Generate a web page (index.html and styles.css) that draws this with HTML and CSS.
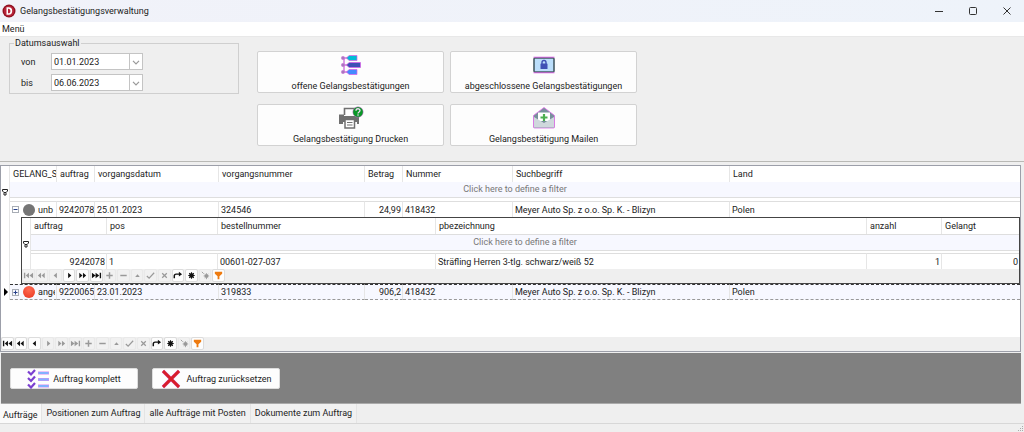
FILE: index.html
```html
<!DOCTYPE html>
<html lang="de">
<head>
<meta charset="utf-8">
<title>Gelangsbestätigungsverwaltung</title>
<link rel="stylesheet" href="styles.css">
</head>
<body>
<svg class="sprite" aria-hidden="true">
  <symbol id="first" viewBox="0 0 12 12"><path d="M1 3h1.500v6H1zM6.500 3v6L3 6zM11 3v6L7 6z"/></symbol>
  <symbol id="rewind" viewBox="0 0 12 12"><path d="M5.500 3v6L2 6zM9.500 3v6L6 6z"/></symbol>
  <symbol id="prev" viewBox="0 0 12 12"><path d="M7.500 3v6L4 6z"/></symbol>
  <symbol id="next" viewBox="0 0 12 12"><path d="M4.500 3v6L8 6z"/></symbol>
  <symbol id="forward" viewBox="0 0 12 12"><path d="M2.500 3v6L6 6zM6.500 3v6L10 6z"/></symbol>
  <symbol id="last" viewBox="0 0 12 12"><path d="M1 3v6l4-3zM5 3v6l4-3zM9.500 3H11v6H9.500z"/></symbol>
  <symbol id="plus" viewBox="0 0 12 12"><path d="M5.200 2.500h1.600v2.700h2.700v1.600H6.800v2.700H5.200V6.800H2.500V5.200h2.700z"/></symbol>
  <symbol id="minus" viewBox="0 0 12 12"><path d="M2.500 5.200h7v1.600h-7z"/></symbol>
  <symbol id="edit" viewBox="0 0 12 12"><path d="M3.500 7.500h5L6 4.500z"/></symbol>
  <symbol id="post" viewBox="0 0 12 12"><path d="M2 6.500L4.500 9 10 3" fill="none" stroke="currentColor" stroke-width="1.300"/></symbol>
  <symbol id="cancel" viewBox="0 0 12 12"><path d="M3.500 3.500l5 5M8.500 3.500l-5 5" fill="none" stroke="currentColor" stroke-width="1.300"/></symbol>
  <symbol id="refresh" viewBox="0 0 12 12"><path d="M2.500 9V6.500q0-2 2-2H8" fill="none" stroke="currentColor" stroke-width="1.600"/><path d="M7.500 2L11 4.500 7.500 7z"/></symbol>
  <symbol id="mark" viewBox="0 0 12 12"><circle cx="6" cy="6" r="2.500"/><path d="M6 2.500v7M2.500 6h7M3.500 3.500l5 5M8.500 3.500l-5 5" stroke="currentColor" stroke-width="1.200"/></symbol>
  <symbol id="goto" viewBox="0 0 12 12"><circle cx="7" cy="6.500" r="2"/><path d="M7 3.500v6.500M4 6.500h6M5 4.500l4 4M9 4.500l-4 4M2 2l2 2" stroke="currentColor" stroke-width="1"/></symbol>
  <symbol id="filter" viewBox="0 0 12 12"><path d="M2 2h8v2L7 6.800V10H5V6.800L2 4z" fill="#ee7b10"/></symbol>
  <symbol id="pin" viewBox="0 0 8 8"><path d="M1.500 1.500h5v1.500L5 4.500H3L1.500 3zM3 4.500h2v2.500H3z" fill="none" stroke="#222" stroke-width="1"/></symbol>
</svg>

<header class="titlebar">
  <svg class="app-icon" viewBox="0 0 14 14" aria-hidden="true"><circle cx="7" cy="7" r="6.500" fill="#8f1020"/><circle cx="7" cy="7" r="5.200" fill="#b8243a"/><path d="M4.500 3.300h2.300a3.400 3.700 0 0 1 0 7.400H4.500zM6 4.700v4.600c3.300.3 3.300-4.900 0-4.600z" fill="#fff" fill-rule="evenodd"/></svg>
  <h1>Gelangsbestätigungsverwaltung</h1>
  <div class="window-buttons">
    <button type="button" aria-label="Minimieren"><svg viewBox="0 0 10 10"><path d="M1 5.500h8"/></svg></button>
    <button type="button" aria-label="Maximieren"><svg viewBox="0 0 10 10"><rect x="1.500" y="1.500" width="7" height="7" rx="1"/></svg></button>
    <button type="button" aria-label="Schließen"><svg viewBox="0 0 10 10"><path d="M1.500 1.500l7 7M8.500 1.500l-7 7"/></svg></button>
  </div>
</header>

<nav class="menubar"><button type="button">Menü</button></nav>

<section class="toolbar">
  <fieldset class="dates">
    <legend>Datumsauswahl</legend>
    <label for="von">von</label>
    <div class="combo"><input id="von" value="01.01.2023"><button type="button" aria-label="Kalender von"><svg viewBox="0 0 10 10"><path d="M2.500 4L5 6.500 7.500 4"/></svg></button></div>
    <label for="bis">bis</label>
    <div class="combo"><input id="bis" value="06.06.2023"><button type="button" aria-label="Kalender bis"><svg viewBox="0 0 10 10"><path d="M2.500 4L5 6.500 7.500 4"/></svg></button></div>
  </fieldset>
  <div class="actions">
    <button type="button" class="action">
      <svg viewBox="0 0 24 24" aria-hidden="true"><path d="M5 5v14M5 5h6M5 12h6M5 19h6" stroke="#d173dc" stroke-width="1.400"/><g fill="#a878bd" stroke="#d173dc" stroke-width=".5"><circle cx="4" cy="5" r="1.700"/><circle cx="4" cy="12" r="1.700"/><circle cx="4" cy="19" r="1.700"/></g><g stroke="#dc5be9" stroke-width=".7"><path d="M10 2.500h8v5h-8L7.500 5z" fill="#00bcd4"/><path d="M10 9.500h11.500v5H10L7.500 12z" fill="#3f51b5"/><path d="M10 16.500h8v5h-8L7.500 19z" fill="#448aff"/></g></svg>
      <span>offene Gelangsbestätigungen</span>
    </button>
    <button type="button" class="action">
      <svg viewBox="0 0 24 24" aria-hidden="true"><rect x="2" y="5" width="20" height="14" rx="1" fill="#bbdefb" stroke="#455a64" stroke-width="1.600"/><path d="M1.500 4.200h21M1.500 19.800h21" stroke="#dc4de7" stroke-width=".8"/><path d="M10 11V9.500a2 2 0 0 1 4 0V11" fill="none" stroke="#3f51b5" stroke-width="1.400"/><rect x="8.500" y="10.500" width="7" height="5.500" rx=".6" fill="#3f51b5"/></svg>
      <span>abgeschlossene Gelangsbestätigungen</span>
    </button>
    <button type="button" class="action">
      <svg class="printer" viewBox="0 0 26 24" aria-hidden="true"><path d="M6.500 9V2.500h10V9" fill="#fff" stroke="#707070" stroke-width="1.600"/><path d="M3 10.500V8.500H1V18h4v-2h14v2h2v-7.500a2 2 0 0 0-2-2h-2v1.500H6V8.500H3z" fill="#707070"/><path d="M7 13.500h9.500V22H7z" fill="#fff" stroke="#707070" stroke-width="1.500"/><path d="M9 16.500h5.500M9 19h5.500" stroke="#707070" stroke-width="1.200"/><circle cx="20" cy="6" r="5.200" fill="#0a9827" stroke="#d267d8" stroke-width=".5"/><path d="M18 4.800c0-2.700 4-2.700 4-.2 0 1.400-2 1.300-2 3" fill="none" stroke="#f3d9f5" stroke-width="1.300"/><circle cx="20" cy="9" r=".8" fill="#f3d9f5"/></svg>
      <span>Gelangsbestätigung Drucken</span>
    </button>
    <button type="button" class="action">
      <svg viewBox="0 0 24 24" aria-hidden="true"><path d="M1.500 9.500L12 1.500l10.500 8V21q0 1-1 1h-19q-1 0-1-1z" fill="#78909c" stroke="#e06ae9" stroke-width=".8"/><path d="M6 6.500h12V15H6z" fill="#fff"/><path d="M2 11l10 6 10-6v10.500H2z" fill="#cfd8dc"/><path d="M12 8v7M8.500 11.500h7" stroke="#4caf50" stroke-width="2.200"/></svg>
      <span>Gelangsbestätigung Mailen</span>
    </button>
  </div>
</section>

<main class="grid">
  <div class="grid-body">
    <table class="master">
      <colgroup><col class="c-ind"><col class="c-status"><col class="c-auftrag"><col class="c-datum"><col class="c-vnr"><col class="c-betrag"><col class="c-nummer"><col class="c-such"><col></colgroup>
      <thead>
        <tr><td class="ind"></td><th>GELANG_S</th><th>auftrag</th><th>vorgangsdatum</th><th>vorgangsnummer</th><th>Betrag</th><th>Nummer</th><th>Suchbegriff</th><th>Land</th></tr>
        <tr class="filter-row"><td class="ind"><svg class="pin" aria-hidden="true"><use href="#pin"/></svg></td><td colspan="8"><div>Click here to define a filter</div></td></tr>
      </thead>
      <tbody>
        <tr><td class="ind"></td><td><div class="status"><button type="button" class="toggle" aria-label="Zuklappen"><svg viewBox="0 0 7 7"><path d="M1.500 3.500h4"/></svg></button><i class="dot"></i><span>unb</span></div></td><td class="num">9242078</td><td>25.01.2023</td><td>324546</td><td class="num">24,99</td><td>418432</td><td>Meyer Auto Sp. z o.o. Sp. K. - Blizyn</td><td>Polen</td></tr>
        <tr class="detail-row"><td class="ind"></td><td colspan="8">
          <div class="detail">
            <table>
              <colgroup><col class="c-ind"><col class="d-auftrag"><col class="d-pos"><col class="d-bnr"><col><col class="d-anzahl"><col class="d-gelangt"></colgroup>
              <thead>
                <tr><td class="ind"></td><th>auftrag</th><th>pos</th><th>bestellnummer</th><th>pbezeichnung</th><th>anzahl</th><th>Gelangt</th></tr>
                <tr class="filter-row"><td class="ind"><svg class="pin" aria-hidden="true"><use href="#pin"/></svg></td><td colspan="6"><div>Click here to define a filter</div></td></tr>
              </thead>
              <tbody>
                <tr><td class="ind"></td><td class="num">9242078</td><td>1</td><td>00601-027-037</td><td>Sträfling Herren 3-tlg. schwarz/weiß 52</td><td class="num">1</td><td class="num">0</td></tr>
              </tbody>
            </table>
            <div class="navigator">
              <button type="button" disabled aria-label="Erster"><svg><use href="#first"/></svg></button>
              <button type="button" disabled aria-label="Seite zurück"><svg><use href="#rewind"/></svg></button>
              <button type="button" disabled aria-label="Zurück"><svg><use href="#prev"/></svg></button>
              <button type="button" aria-label="Weiter"><svg><use href="#next"/></svg></button>
              <button type="button" aria-label="Seite vor"><svg><use href="#forward"/></svg></button>
              <button type="button" aria-label="Letzter"><svg><use href="#last"/></svg></button>
              <button type="button" disabled aria-label="Einfügen"><svg><use href="#plus"/></svg></button>
              <button type="button" disabled aria-label="Löschen"><svg><use href="#minus"/></svg></button>
              <button type="button" disabled aria-label="Bearbeiten"><svg><use href="#edit"/></svg></button>
              <button type="button" disabled aria-label="Speichern"><svg><use href="#post"/></svg></button>
              <button type="button" disabled aria-label="Abbrechen"><svg><use href="#cancel"/></svg></button>
              <button type="button" aria-label="Aktualisieren"><svg><use href="#refresh"/></svg></button>
              <button type="button" aria-label="Lesezeichen"><svg><use href="#mark"/></svg></button>
              <button type="button" disabled aria-label="Zum Lesezeichen"><svg><use href="#goto"/></svg></button>
              <button type="button" aria-label="Filter"><svg><use href="#filter"/></svg></button>
            </div>
          </div>
        </td></tr>
        <tr class="focused"><td class="ind"><svg class="current" viewBox="0 0 5 8" aria-hidden="true"><path d="M0 0v8l4-4z"/></svg></td><td><div class="status"><button type="button" class="toggle" aria-label="Aufklappen"><svg viewBox="0 0 7 7"><path d="M1.500 3.500h4M3.500 1.500v4"/></svg></button><i class="dot red"></i><span>ange</span></div></td><td class="num">9220065</td><td>23.01.2023</td><td>319833</td><td class="num">906,2</td><td>418432</td><td>Meyer Auto Sp. z o.o. Sp. K. - Blizyn</td><td>Polen</td></tr>
      </tbody>
    </table>
  </div>
  <div class="nav-row">
    <div class="navigator">
      <button type="button" aria-label="Erster"><svg><use href="#first"/></svg></button>
      <button type="button" aria-label="Seite zurück"><svg><use href="#rewind"/></svg></button>
      <button type="button" aria-label="Zurück"><svg><use href="#prev"/></svg></button>
      <button type="button" disabled aria-label="Weiter"><svg><use href="#next"/></svg></button>
      <button type="button" disabled aria-label="Seite vor"><svg><use href="#forward"/></svg></button>
      <button type="button" disabled aria-label="Letzter"><svg><use href="#last"/></svg></button>
      <button type="button" disabled aria-label="Einfügen"><svg><use href="#plus"/></svg></button>
      <button type="button" disabled aria-label="Löschen"><svg><use href="#minus"/></svg></button>
      <button type="button" disabled aria-label="Bearbeiten"><svg><use href="#edit"/></svg></button>
      <button type="button" disabled aria-label="Speichern"><svg><use href="#post"/></svg></button>
      <button type="button" disabled aria-label="Abbrechen"><svg><use href="#cancel"/></svg></button>
      <button type="button" aria-label="Aktualisieren"><svg><use href="#refresh"/></svg></button>
      <button type="button" aria-label="Lesezeichen"><svg><use href="#mark"/></svg></button>
      <button type="button" disabled aria-label="Zum Lesezeichen"><svg><use href="#goto"/></svg></button>
      <button type="button" aria-label="Filter"><svg><use href="#filter"/></svg></button>
    </div>
  </div>
</main>

<section class="commands">
  <button type="button"><svg viewBox="0 0 22 20" aria-hidden="true"><path d="M1 2.500L4 5.500 8 1M1 9L4 12 8 7.500M1 15.500L4 18.500 8 14" fill="none" stroke="#7b3fd0" stroke-width="2.200"/><path d="M11 4H22M11 10.500H22M11 17H22" stroke="#d88cf0" stroke-width="2.800"/><path d="M11.500 4h10M11.500 10.500h10M11.500 17h10" stroke="#82b1ff" stroke-width="1.800"/></svg>Auftrag komplett</button>
  <button type="button" class="reset"><svg viewBox="0 0 20 20" aria-hidden="true"><path d="M2 2l16 16M18 2L2 18" stroke="#d63c9b" stroke-width="3.400"/><path d="M2 2l16 16M18 2L2 18" stroke="#d81f27" stroke-width="2.600"/></svg>Auftrag zurücksetzen</button>
</section>

<nav class="tabs">
  <button type="button" class="active">Aufträge</button>
  <button type="button">Positionen zum Auftrag</button>
  <button type="button">alle Aufträge mit Posten</button>
  <button type="button">Dokumente zum Auftrag</button>
</nav>
<footer class="statusbar"><svg viewBox="0 0 6 6" aria-hidden="true"><path d="M4 0h1v1H4zM4 2h1v1H4zM4 4h1v1H4zM2 2h1v1H2zM2 4h1v1H2zM0 4h1v1H0z"/></svg></footer>
</body>
</html>
```
FILE: styles.css
```css
* { box-sizing: border-box; }

body {
  margin: 0;
  min-height: 100vh;
  display: flex;
  flex-direction: column;
  background: #efefef;
  color: #222;
  font: 9px/12px Roboto, "Open Sans", sans-serif;
}

button, input {
  margin: 0;
  padding: 0;
  border: 0;
  background: none;
  color: inherit;
  font: inherit;
}

svg { display: block; flex: none; }
.sprite { position: absolute; width: 0; height: 0; }

.titlebar {
  display: flex;
  align-items: center;
  height: 22px;
  padding-left: 2px;
  background: linear-gradient(90deg, #f1f2f9, #eef3fa);
}
.titlebar h1 { margin: 0; padding-left: 4px; font: inherit; }
.app-icon { width: 14px; height: 14px; }
.window-buttons { display: flex; margin-left: auto; }
.window-buttons button {
  display: flex;
  align-items: center;
  justify-content: center;
  width: 34px;
  height: 20px;
}
.window-buttons svg { width: 10px; height: 10px; fill: none; stroke: #333; }

.menubar {
  height: 15px;
  padding: 1px 2px;
  background: #fff;
  border-bottom: 1px solid #e8e8e8;
}

.toolbar {
  display: flex;
  align-items: flex-start;
  gap: 18px;
  height: 125px;
  padding: 0 9px;
  border-bottom: 1px solid #b9b9b5;
}
.dates {
  display: grid;
  grid-template-columns: 30px 92px;
  gap: 4px 0;
  align-items: center;
  width: 230px;
  height: 57px;
  margin: 0;
  padding: 4px 11px 0;
  border: 1px solid #cfcfcf;
  align-content: start;
}
.dates legend { padding: 0 1px; margin-left: -7px; }
.combo {
  display: flex;
  height: 17px;
  background: #fff;
  border: 1px solid #c4c4c4;
}
.combo input { flex: 1; min-width: 0; padding-left: 2px; }
.combo button {
  display: flex;
  align-items: center;
  width: 13px;
  border-left: 1px solid #c4c4c4;
}
.combo svg { width: 12px; height: 12px; fill: none; stroke: #999; }

.actions {
  display: grid;
  grid-template-columns: 187px 187px;
  gap: 11px 6px;
  padding-top: 14px;
}
.action {
  display: flex;
  flex-direction: column;
  align-items: center;
  height: 42px;
  padding-top: 1px;
  background: #fdfdfd;
  border: 1px solid #d2d2d2;
  border-radius: 2px;
}
.action svg { width: 24px; height: 24px; }
.action .printer { width: 26px; }
.action span { line-height: 18px; }

.grid {
  display: flex;
  flex-direction: column;
  flex: 1;
  margin: 3px 3px 0 0;
  border: 1px solid #9c9fa9;
  background: #fff;
}
.grid-body { flex: 1; }

table {
  width: 100%;
  table-layout: fixed;
  border-collapse: separate;
  border-spacing: 0;
}
.c-ind { width: 9px; }
.c-status { width: 47px; }
.c-auftrag { width: 38px; }
.c-datum { width: 124px; }
.c-vnr { width: 146px; }
.c-betrag { width: 38px; }
.c-nummer { width: 110px; }
.c-such { width: 217px; }
.d-auftrag { width: 76px; }
.d-pos { width: 111px; }
.d-bnr { width: 218px; }
.d-anzahl { width: 75px; }
.d-gelangt { width: 77px; }

td, th {
  height: 16px;
  padding: 0 1px 0 2px;
  border-right: 1px solid #e6e6e6;
  text-align: left;
  font-weight: normal;
  vertical-align: middle;
  white-space: nowrap;
  overflow: hidden;
}
th { padding-left: 3px; }
tbody td { border-top: 1px solid #dedede; }
td:last-child, th:last-child { border-right: 0; }
td.ind { padding: 0; border-top: 0; }
td.num { padding-right: 1px; text-align: right; }
.filter-row td { height: 19px; padding: 0; vertical-align: top; }
.filter-row div {
  height: 16px;
  line-height: 15px;
  background: #f7f8ff;
  border-bottom: 1px solid #dedede;
  color: #777;
  text-align: center;
}
.filter-row .pin { margin: 6px 0 0 0; }
.pin { width: 8px; height: 8px; }
.current { width: 5px; height: 8px; margin-left: 3px; }

.status { display: flex; align-items: center; overflow: hidden; }
.toggle {
  flex: none;
  width: 7px;
  height: 7px;
  margin-right: 4px;
  outline: 1px solid #a8adb5;
  outline-offset: -1px;
}
.toggle svg { width: 7px; height: 7px; stroke: #26408b; }
.dot {
  flex: none;
  width: 12px;
  height: 12px;
  margin-right: 3px;
  border-radius: 50%;
  background: #757575;
}
.dot.red { background: radial-gradient(circle at 50% 30%, #ff6b52, #e8341f); }

.detail-row > td:last-child { padding: 0 0 0 11px; border: 0; }
.detail { border: 1px solid #444; background: #efefef; }
.detail table { background: #fff; }

.focused td:not(.ind) {
  background: #f7f8ff;
  border-top: 1px dashed #333;
  border-bottom: 1px dashed #999;
}

.navigator {
  display: grid;
  grid-template-columns: repeat(15, minmax(0, 1fr));
  width: 204px;
  height: 14px;
}
.nav-row { background: #efefef; }
.navigator button {
  display: flex;
  align-items: center;
  justify-content: center;
  margin: 0 1px 1px 0;
  background: #fdfdfd;
  border: 1px solid #dcdcdc;
  border-radius: 2px;
  color: #111;
}
.navigator button:disabled { background: #f1f1f1; border-color: #e9e9e9; color: #999; }
.navigator svg { width: 11px; height: 11px; fill: currentColor; }

.commands {
  display: flex;
  gap: 14px;
  height: 51px;
  margin: 1px 3px 0 1px;
  padding: 15px 9px;
  background: #808080;
  border-bottom: 1px solid #aaa;
}
.commands button {
  display: flex;
  align-items: center;
  justify-content: center;
  gap: 4px;
  width: 128px;
  height: 21px;
  background: #fdfdfd;
  border: 1px solid #ddd;
  border-radius: 2px;
}
.commands svg { width: 22px; height: 20px; }
.commands .reset { gap: 4px; }

.tabs { display: flex; height: 19px; }
.tabs button {
  padding: 0 4px 1px;
  border-right: 1px solid #e4e4e4;
  background: #f1f1f1;
}
.tabs .active { padding: 2px 4px 0 3px; background: #fafafa; }

.statusbar {
  display: flex;
  align-items: flex-end;
  justify-content: flex-end;
  height: 9px;
  border-top: 1px solid #d7d7d7;
}
.statusbar svg { width: 6px; height: 6px; fill: #aaa; }
```
